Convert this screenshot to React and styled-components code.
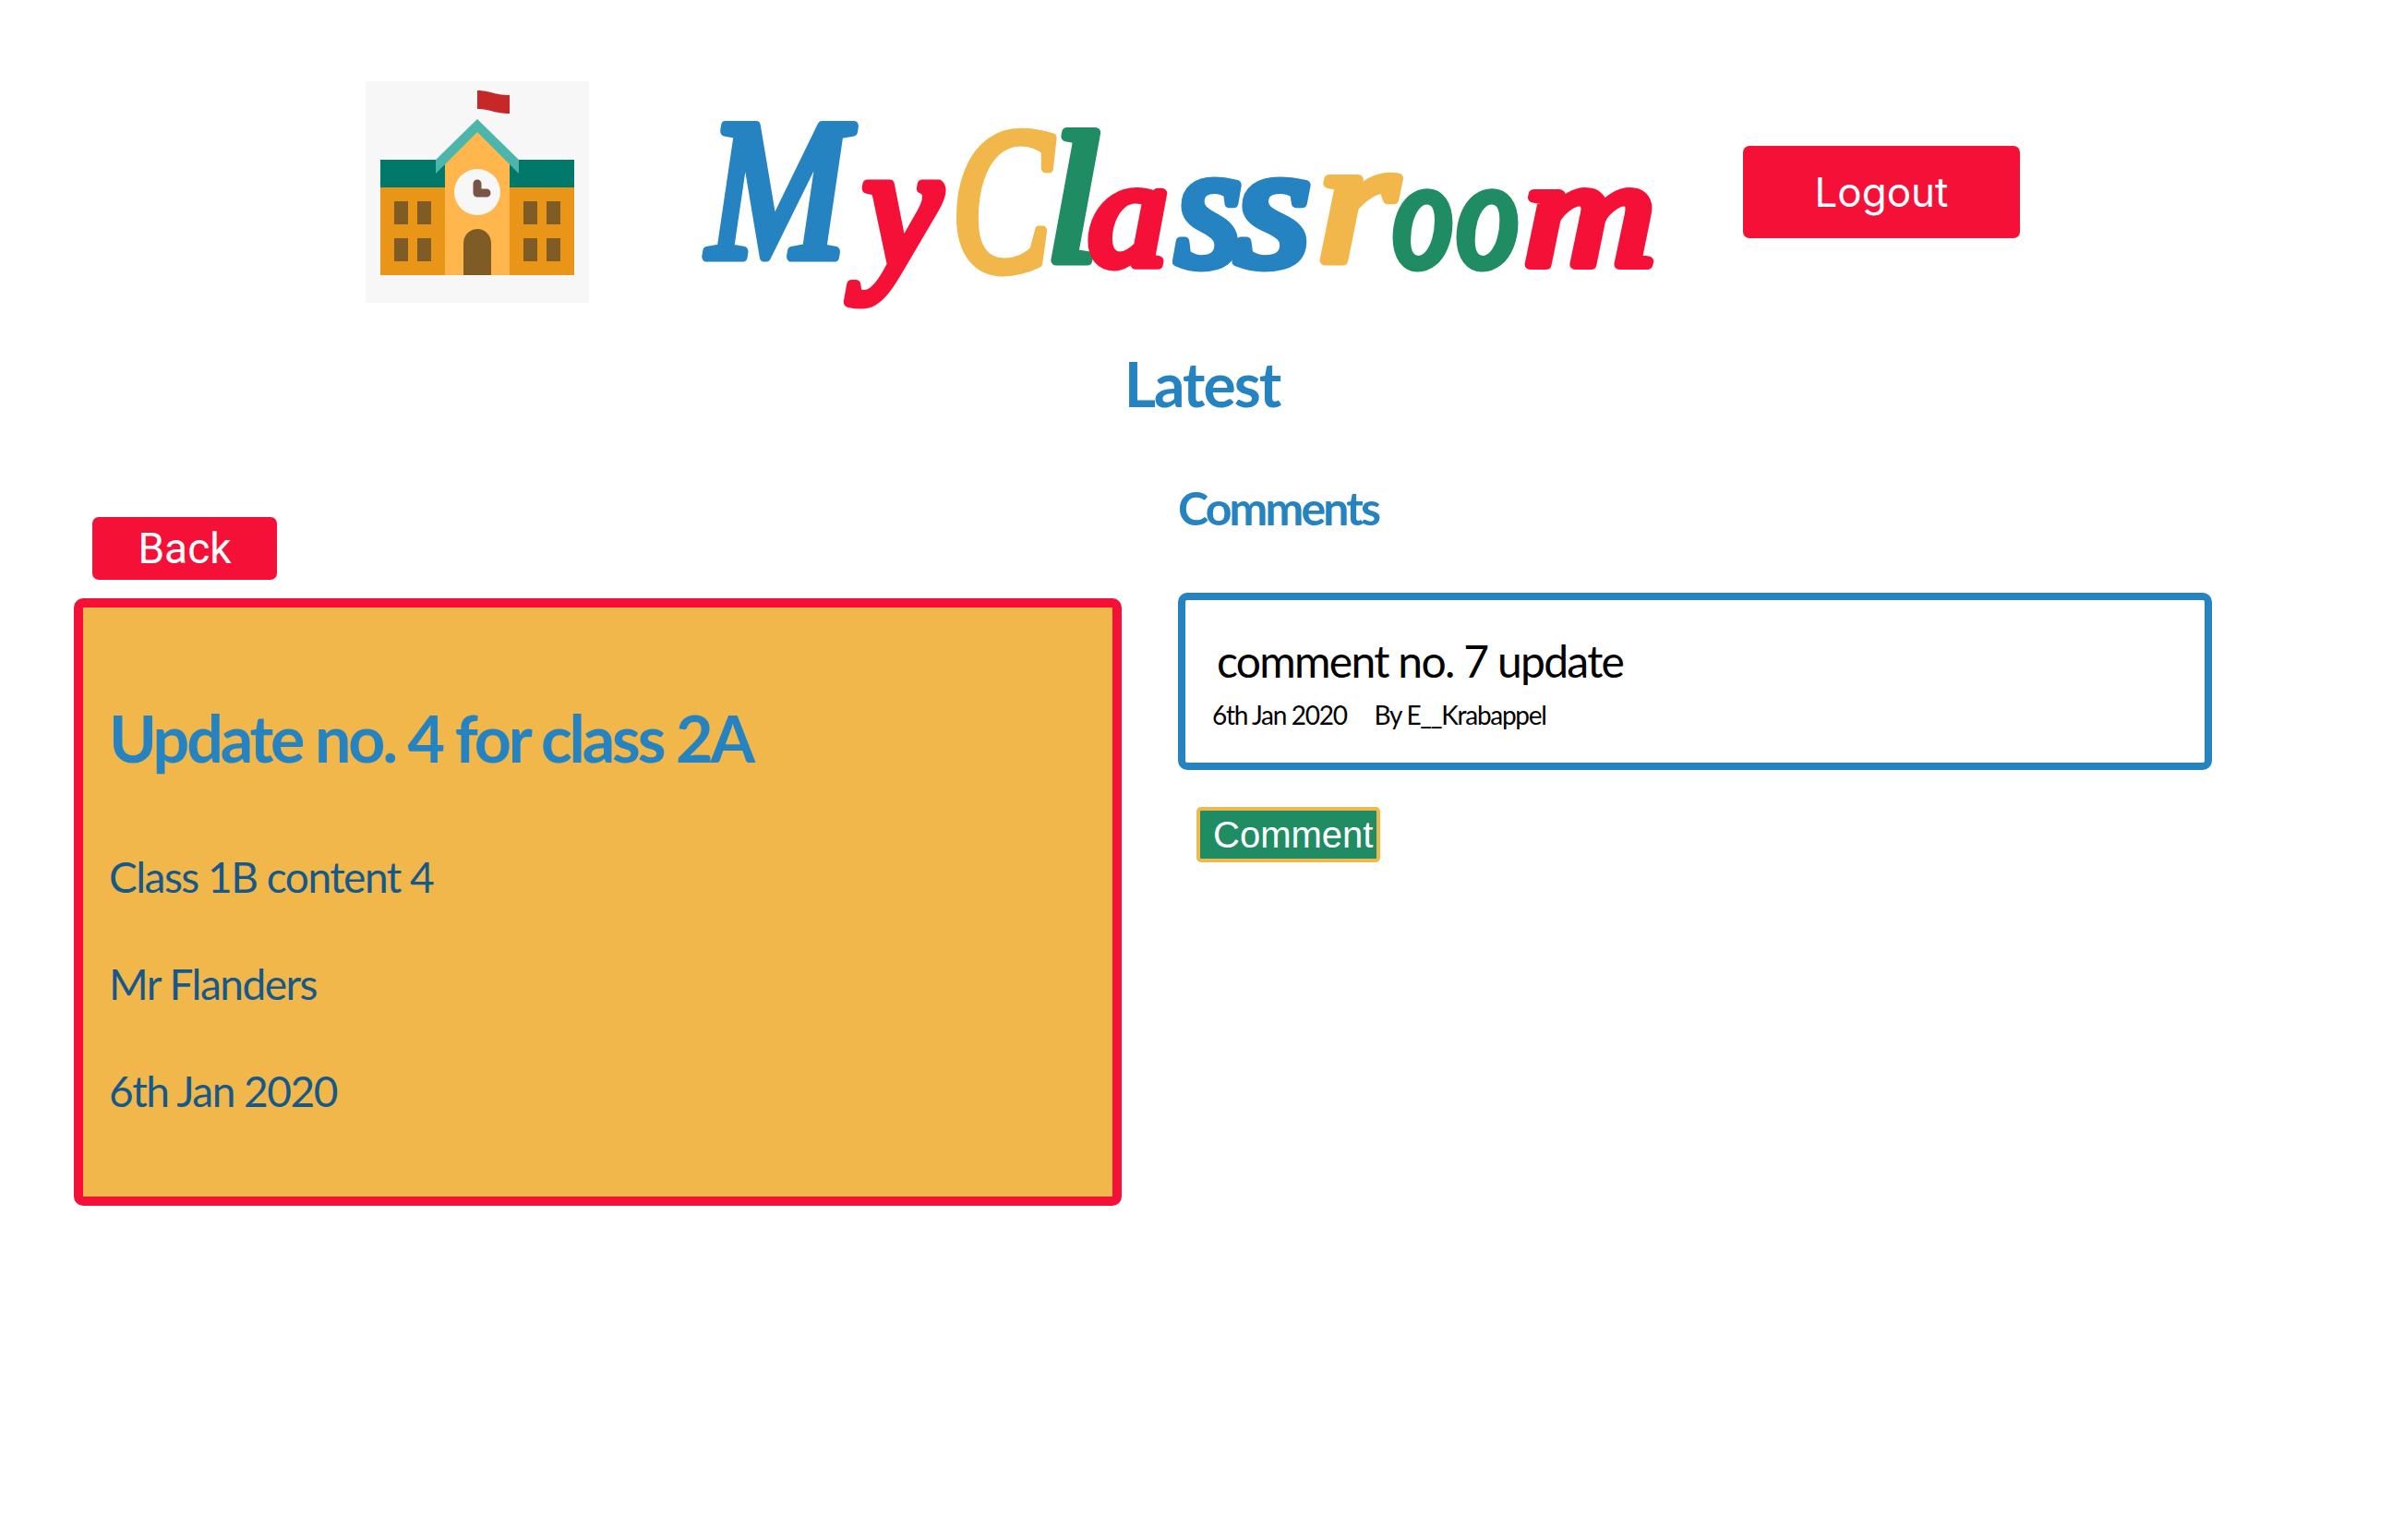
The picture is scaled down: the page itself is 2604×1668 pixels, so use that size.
import React from 'react'
import styled, { createGlobalStyle } from 'styled-components'

const blue = '#2583c1'
const red = '#f51038'
const yellow = '#f1b74b'
const green = '#1f8c63'
const hand = 'Lato, sans-serif'

const GlobalStyle = createGlobalStyle`
  body {
    margin: 0;
    background: #fff;
    font-family: ${hand};
  }
`

const Page = styled.div`
  width: 2604px;
  min-height: 1668px;
  padding-top: 88px;
  box-sizing: border-box;
`

const Header = styled.header`
  display: flex;
  align-items: center;
  padding-left: 396px;
  height: 240px;
`

const Logo = styled.svg`
  width: 242px;
  height: 240px;
  flex: none;
`

const Brand = styled.h1`
  width: 1045px;
  height: 240px;
  margin: 0 82px 0 123px;
  flex: none;
`

const BrandArt = styled.svg`
  display: block;
  width: 100%;
  height: 100%;
  overflow: visible;
`

const BrandLetter = styled.text`
  font-family: "Liberation Serif", serif;
  font-style: italic;
  font-weight: 400;
  fill: ${(p) => p.$color};
  stroke: ${(p) => p.$color};
  stroke-width: 11px;
  stroke-linejoin: round;
  stroke-linecap: round;
`

const RedButton = styled.button`
  display: block;
  border: none;
  border-radius: 7px;
  background: ${red};
  color: #fff;
  padding: 0;
  cursor: pointer;
`

const LogoutButton = styled(RedButton)`
  width: 300px;
  height: 100px;
  font-family: Inter, sans-serif;
  font-size: 44px;
`

const BackButton = styled(RedButton)`
  width: 200px;
  height: 68px;
  margin-left: 20px;
  font-family: Roboto, sans-serif;
  font-size: 46px;
`

const Latest = styled.h2`
  margin: 48px 0 0;
  text-align: center;
  font-size: 66px;
  line-height: 80px;
  font-weight: 700;
  letter-spacing: -2px;
  color: ${blue};
`

const Columns = styled.main`
  display: flex;
  gap: 61px;
  margin-top: 54px;
  padding-left: 80px;
`

const LeftColumn = styled.section`
  width: 1135px;
  flex: none;
  padding-top: 50px;
`

const RightColumn = styled.section`
  width: 1120px;
  flex: none;
`

const PostCard = styled.article`
  box-sizing: border-box;
  height: 658px;
  margin-top: 20px;
  padding: 99px 28px 0;
  background: ${yellow};
  border: 10px solid ${red};
  border-radius: 10px;
`

const PostTitle = styled.h3`
  margin: 0 0 83px;
  font-size: 70px;
  line-height: 84px;
  font-weight: 700;
  letter-spacing: -3.2px;
  color: ${blue};
`

const PostLine = styled.p`
  margin: 0 0 64px;
  font-size: 46px;
  line-height: 52px;
  letter-spacing: -1.5px;
  color: #15598a;
`

const CommentsTitle = styled.h2`
  margin: 10px 0 0;
  font-size: 50px;
  line-height: 60px;
  font-weight: 700;
  letter-spacing: -2.9px;
  color: ${blue};
`

const CommentCard = styled.article`
  box-sizing: border-box;
  height: 192px;
  margin-top: 62px;
  padding: 36px 30px 0 34px;
  border: 8px solid ${blue};
  border-radius: 10px;
`

const CommentText = styled.p`
  margin: 0 0 8px;
  font-size: 48px;
  line-height: 60px;
  letter-spacing: -1.7px;
  color: #000;
`

const CommentMeta = styled.div`
  display: flex;
  gap: 30px;
  margin-left: -5px;
  font-size: 28px;
  line-height: 40px;
  letter-spacing: -1.3px;
  color: #000;
`

const CommentButton = styled.button`
  display: block;
  box-sizing: border-box;
  width: 199px;
  height: 60px;
  margin: 40px 0 0 20px;
  padding: 0 0 0 14px;
  border: 4px solid ${yellow};
  border-radius: 5px;
  background: ${green};
  color: #fff;
  font-family: "Liberation Sans", sans-serif;
  font-size: 40px;
  text-align: left;
  white-space: nowrap;
`

// left edge, width, baseline and size of each letter of the logo
const brandLetters = [
  { ch: 'M', x: 6, w: 150, y: 190, size: 216, color: blue },
  { ch: 'y', x: 174, w: 84, y: 200, size: 190, color: red },
  { ch: 'C', x: 270, w: 108, y: 204, size: 222, color: yellow },
  { ch: 'l', x: 372, w: 58, y: 194, size: 200, color: green },
  { ch: 'a', x: 418, w: 86, y: 198, size: 165, color: red },
  { ch: 's', x: 512, w: 72, y: 199, size: 190, color: blue },
  { ch: 's', x: 577, w: 82, y: 199, size: 190, color: blue },
  { ch: 'r', x: 666, w: 86, y: 194, size: 190, color: yellow },
  { ch: 'o', x: 748, w: 64, y: 199, size: 165, color: green },
  { ch: 'o', x: 817, w: 66, y: 199, size: 165, color: green },
  { ch: 'm', x: 890, w: 142, y: 199, size: 165, color: red },
]

const SchoolLogo = () => (
  <Logo viewBox="0 0 242 240">
    <rect width="242" height="240" fill="#f7f7f7" />
    <path d="M121 10c14 0 18 5 35 5v20c-17 0-21-5-35-5z" fill="#c62828" />
    <rect x="16" y="85" width="210" height="30" fill="#00796b" />
    <rect x="16" y="115" width="210" height="95" fill="#e89518" />
    <path d="M86 210V85l35-35 35 35v125z" fill="#ffb74d" />
    <path d="M121 41l45 44v15l-45-45-45 45V85z" fill="#4db6ac" />
    {[31, 56, 171, 196].map((x) =>
      [130, 170].map((y) => <rect key={`${x}-${y}`} x={x} y={y} width="15" height="25" fill="#7f5b25" />)
    )}
    <path d="M106 210v-35a15 15 0 0 1 30 0v35z" fill="#7f5b25" />
    <circle cx="121" cy="120" r="25" fill="#f7f7f7" />
    <path d="M121 111v10h10" fill="none" stroke="#795548" strokeWidth="9" strokeLinecap="round" strokeLinejoin="round" />
  </Logo>
)

const App = () => (
  <Page>
    <GlobalStyle />
    <Header>
      <SchoolLogo />
      <Brand>
        <BrandArt viewBox="0 0 1045 240">
          {brandLetters.map((l, i) => (
            <BrandLetter
              key={i}
              x={l.x}
              y={l.y}
              fontSize={l.size}
              textLength={l.w}
              lengthAdjust="spacingAndGlyphs"
              $color={l.color}
            >
              {l.ch}
            </BrandLetter>
          ))}
        </BrandArt>
      </Brand>
      <LogoutButton>Logout</LogoutButton>
    </Header>
    <Latest>Latest</Latest>
    <Columns>
      <LeftColumn>
        <BackButton>Back</BackButton>
        <PostCard>
          <PostTitle>Update no. 4 for class 2A</PostTitle>
          <PostLine>Class 1B content 4</PostLine>
          <PostLine>Mr Flanders</PostLine>
          <PostLine>6th Jan 2020</PostLine>
        </PostCard>
      </LeftColumn>
      <RightColumn>
        <CommentsTitle>Comments</CommentsTitle>
        <CommentCard>
          <CommentText>comment no. 7 update</CommentText>
          <CommentMeta>
            <span>6th Jan 2020</span>
            <span>By E__Krabappel</span>
          </CommentMeta>
        </CommentCard>
        <CommentButton>Comment</CommentButton>
      </RightColumn>
    </Columns>
  </Page>
)

export default App
